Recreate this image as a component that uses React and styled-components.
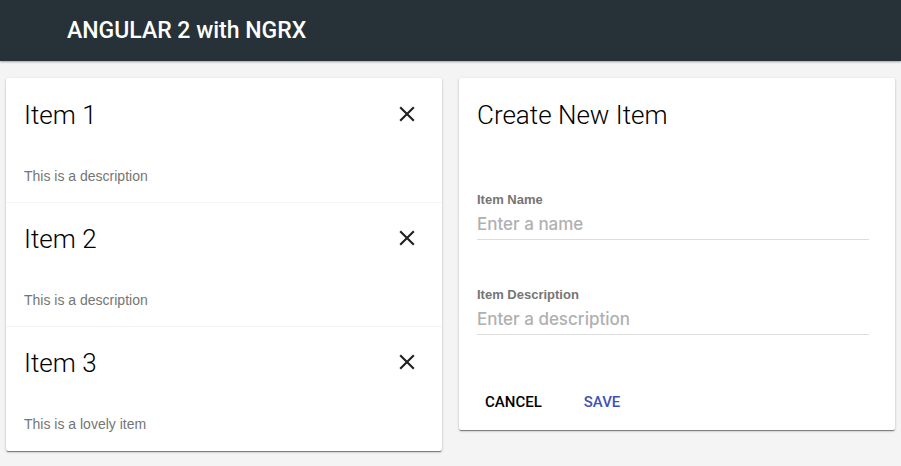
import React from "react";
import styled, { createGlobalStyle } from "styled-components";

const GlobalStyle = createGlobalStyle`
  * { box-sizing: border-box; }
  body {
    margin: 0;
    background: #f4f4f4;
    font-family: Roboto, sans-serif;
    color: #000;
  }
`;

const cardShadow = "0 1px 3px rgba(0, 0, 0, 0.2), 0 1px 1px rgba(0, 0, 0, 0.2), 0 2px 1px -1px rgba(0, 0, 0, 0.3)";

const Toolbar = styled.header`
  display: flex;
  align-items: center;
  height: 61px;
  padding: 0 67px;
  background: #263238;
  color: #fff;
  box-shadow: 0 1px 2px rgba(0, 0, 0, 0.35);
`;

const AppTitle = styled.h1`
  margin: 0;
  font-size: 23px;
  line-height: 28px;
  font-weight: 500;
`;

const Columns = styled.main`
  display: grid;
  grid-template-columns: 1fr 1fr;
  align-items: start;
  gap: 17px;
  padding: 17px 6px 14px;
`;

const ItemList = styled.ul`
  margin: 0;
  padding: 1px 0 0;
  list-style: none;
  background: #fff;
  border-radius: 2px;
  box-shadow: ${cardShadow};
`;

const Item = styled.li`
  padding: 19px 18px;
  & + & { box-shadow: 0 -1px #f4f4f4; }
`;

const ItemHeader = styled.div`
  display: flex;
  align-items: flex-start;
  justify-content: space-between;
`;

const CardTitle = styled.h2`
  margin: 0;
  font-size: 26px;
  line-height: 34px;
  font-weight: 300;
`;

const RemoveButton = styled.button`
  display: grid;
  place-items: center;
  width: 34px;
  height: 32px;
  padding: 0;
  border: 0;
  background: none;
  cursor: pointer;
`;

const ItemText = styled.p`
  margin: 36px 0 0;
  font: 14px/16px "Liberation Sans", sans-serif;
  color: #757575;
`;

const FormCard = styled.form`
  padding: 20px 26px 10px 18px;
  background: #fff;
  border-radius: 2px;
  box-shadow: ${cardShadow};
`;

const Fields = styled.div`
  display: grid;
  gap: 46px;
  margin-top: 59px;
`;

const Field = styled.div`
  display: flex;
  flex-direction: column;
`;

const FieldLabel = styled.label`
  font: bold 13px/18px "Liberation Sans", sans-serif;
  color: #757575;
`;

const FieldInput = styled.input`
  width: 100%;
  height: 31px;
  padding: 0;
  border: 0;
  border-bottom: 1px solid #dcdcdc;
  outline: 0;
  background: none;
  font: 500 17px Inter, sans-serif;
  &::placeholder { color: #b0b0b0; opacity: 1; }
`;

const Actions = styled.div`
  display: flex;
  gap: 26px;
  margin-top: 49px;
`;

const ActionButton = styled.button`
  height: 36px;
  padding: 0 8px;
  border: 0;
  background: none;
  font: 500 15px Roboto, sans-serif;
  color: ${({ $primary }) => ($primary ? "#3f51b5" : "#000")};
  cursor: pointer;
`;

const items = [
  { name: "Item 1", description: "This is a description" },
  { name: "Item 2", description: "This is a description" },
  { name: "Item 3", description: "This is a lovely item" },
];

function CloseIcon() {
  return (
    <svg width="26" height="26" viewBox="0 0 24 24" fill="#212121" aria-hidden="true">
      <path d="M19 6.41L17.59 5 12 10.59 6.41 5 5 6.41 10.59 12 5 17.59 6.41 19 12 13.41 17.59 19 19 17.59 13.41 12z" />
    </svg>
  );
}

export default function App() {
  return (
    <>
      <GlobalStyle />
      <Toolbar>
        <AppTitle>ANGULAR 2 with NGRX</AppTitle>
      </Toolbar>
      <Columns>
        <ItemList>
          {items.map(({ name, description }) => (
            <Item key={name}>
              <ItemHeader>
                <CardTitle>{name}</CardTitle>
                <RemoveButton type="button" aria-label={`Remove ${name}`}>
                  <CloseIcon />
                </RemoveButton>
              </ItemHeader>
              <ItemText>{description}</ItemText>
            </Item>
          ))}
        </ItemList>
        <FormCard onSubmit={(event) => event.preventDefault()}>
          <CardTitle>Create New Item</CardTitle>
          <Fields>
            <Field>
              <FieldLabel htmlFor="item-name">Item Name</FieldLabel>
              <FieldInput id="item-name" placeholder="Enter a name" />
            </Field>
            <Field>
              <FieldLabel htmlFor="item-description">Item Description</FieldLabel>
              <FieldInput id="item-description" placeholder="Enter a description" />
            </Field>
          </Fields>
          <Actions>
            <ActionButton type="reset">CANCEL</ActionButton>
            <ActionButton type="submit" $primary>SAVE</ActionButton>
          </Actions>
        </FormCard>
      </Columns>
    </>
  );
}
